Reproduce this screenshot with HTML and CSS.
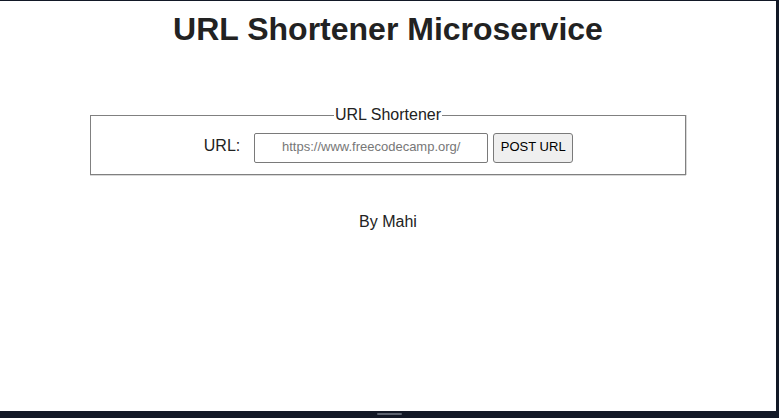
FILE: index.html
```html
<!DOCTYPE html>
<html lang="en">
<head>
<meta charset="utf-8">
<title>URL Shortener Microservice</title>
<link rel="stylesheet" href="styles.css">
</head>
<body>
<div class="frame">
  <main class="screen">
    <h1 class="title">URL Shortener Microservice</h1>
    <form class="form">
      <fieldset class="box">
        <legend class="legend">URL Shortener</legend>
        <div class="row">
          <label class="label" for="url_input">URL:</label>
          <input class="input" id="url_input" type="text" name="url" placeholder="https://www.freecodecamp.org/">
          <button class="btn" type="button">POST URL</button>
        </div>
      </fieldset>
    </form>
    <p class="byline">By Mahi</p>
  </main>
  <div class="bottombar"><span class="handle"></span></div>
</div>
</body>
</html>
```

FILE: styles.css
```css
html, body {
  margin: 0;
  padding: 0;
  background: #121826;
}
body {
  width: 779px;
  height: 418px;
  overflow: hidden;
  font-family: "Liberation Sans", Arial, sans-serif;
  color: #222;
}
.frame {
  display: flex;
  flex-direction: column;
  height: 418px;
  padding-top: 1px;
  box-sizing: border-box;
}
.screen {
  width: 776px;
  height: 410px;
  background: #fff;
  display: flex;
  flex-direction: column;
  align-items: center;
}
.title {
  margin: 10px 0 0;
  font-size: 32px;
  line-height: 37px;
  font-weight: bold;
  text-align: center;
  color: #222;
}
.form {
  margin-top: 58px;
}
.box {
  width: 596px;
  box-sizing: border-box;
  margin: 0;
  border: 1px solid #808080;
  box-shadow: 0 1px 0 #d8d8d8, 1px 0 0 #d8d8d8;
  padding: 9px 10px 11px;
}
.legend {
  margin: 0 auto;
  padding: 0 1px;
  font-size: 16px;
  line-height: 18px;
  color: #222;
}
.row {
  display: flex;
  justify-content: center;
  align-items: center;
  padding-left: 1px;
}
.label {
  font-size: 16px;
  margin: 0 14px 4px 0;
  color: #222;
}
.input {
  width: 234px;
  height: 30px;
  box-sizing: border-box;
  border: 1px solid #7a7a7a;
  border-radius: 2px;
  padding: 0 4px 3px;
  font-family: "Liberation Sans", Arial, sans-serif;
  font-size: 13px;
  text-align: center;
  margin: 0 5px 0 0;
}
.input::placeholder {
  color: #777;
}
.btn {
  height: 30px;
  box-sizing: border-box;
  padding: 0 6px 3px;
  width: 80px;
  margin: 0;
  background: #efefef;
  border: 1px solid #7a7a7a;
  border-radius: 3px;
  font-family: "Liberation Sans", Arial, sans-serif;
  font-size: 13px;
  color: #000;
}
.byline {
  margin: 38px 0 0;
  font-size: 16px;
  line-height: 18px;
  color: #222;
}
.bottombar {
  height: 7px;
  width: 779px;
  display: flex;
  justify-content: center;
  padding-top: 2px;
  box-sizing: border-box;
}
.handle {
  display: block;
  width: 25px;
  height: 2px;
  margin-left: -1px;
  background: #5d6370;
  border-radius: 1px;
}
```
